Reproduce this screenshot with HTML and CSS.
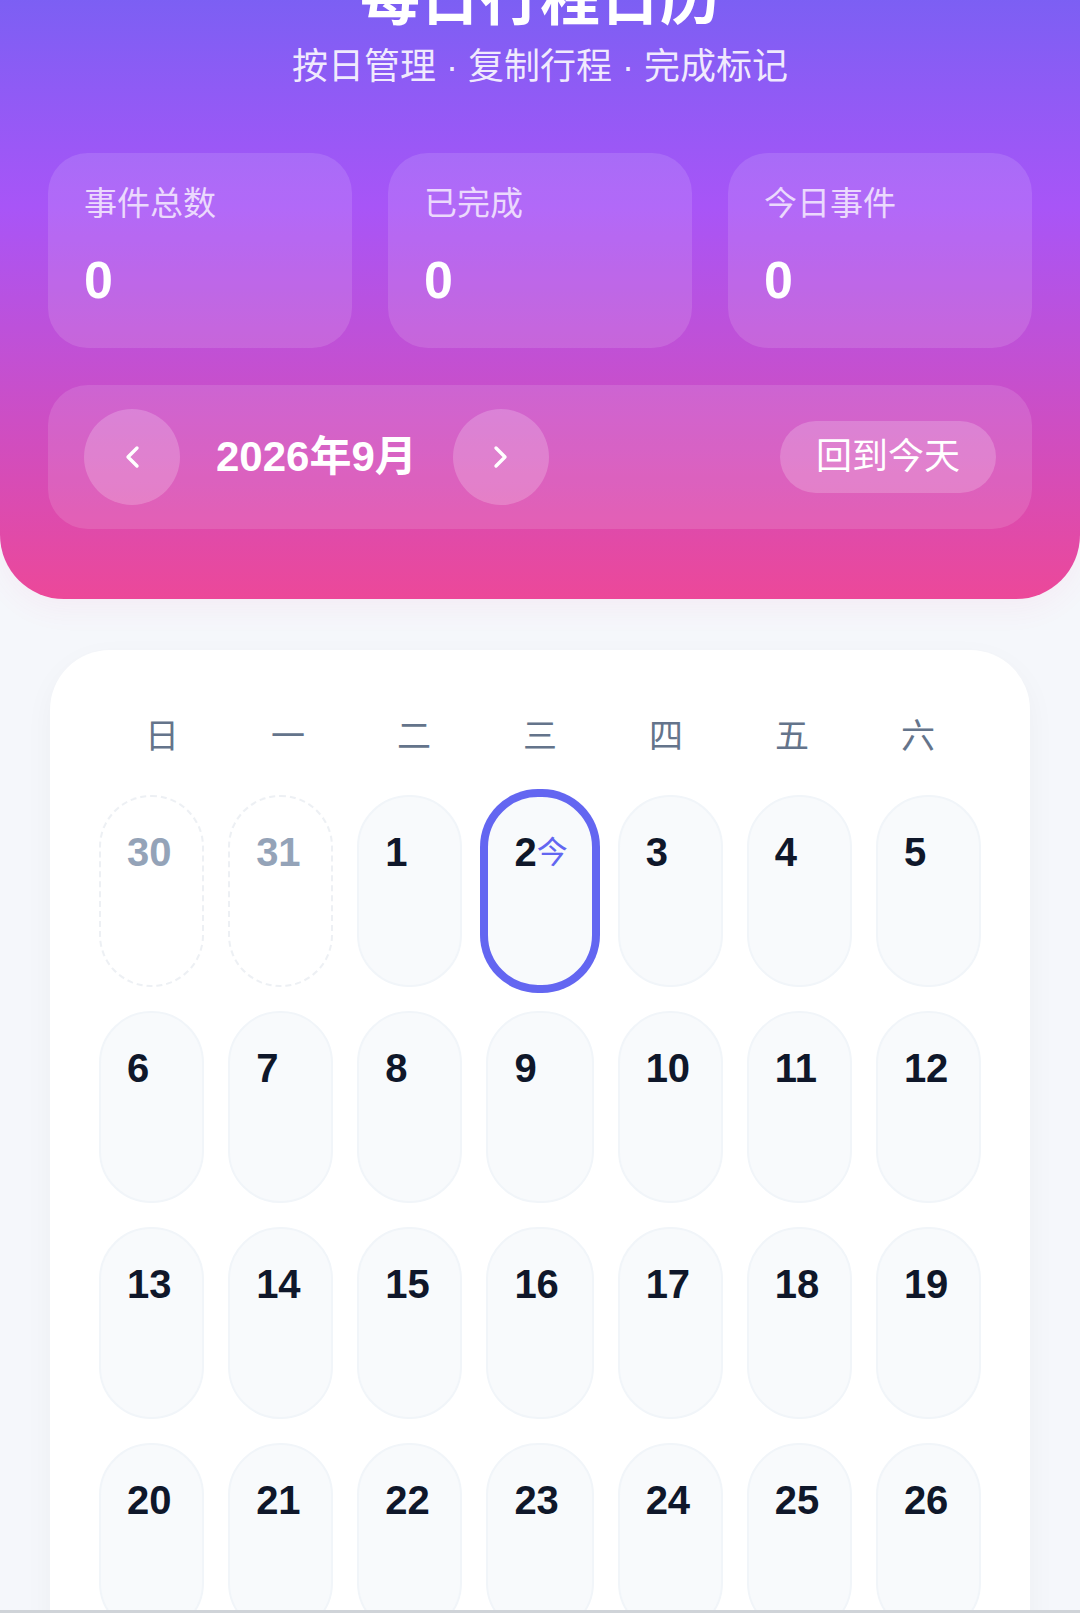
FILE: index.html
```html
<!DOCTYPE html>
<html lang="zh-CN">
<head>
<meta charset="utf-8">
<title>每日行程日历</title>
<link rel="stylesheet" href="styles.css">
</head>
<body>
<header class="hero">
  <h1 class="hero-title">每日行程日历</h1>
  <p class="hero-sub">按日管理 · 复制行程 · 完成标记</p>
  <div class="stats">
    <div class="stat"><div class="stat-label">事件总数</div><div class="stat-value">0</div></div>
    <div class="stat"><div class="stat-label">已完成</div><div class="stat-value">0</div></div>
    <div class="stat"><div class="stat-label">今日事件</div><div class="stat-value">0</div></div>
  </div>
  <div class="nav">
    <div class="nav-left">
      <button class="circle-btn" aria-label="上个月">
        <svg width="16" height="24" viewBox="0 0 16 24"><polyline points="13,3 4,12 13,21" fill="none" stroke="#fff" stroke-width="3.4" stroke-linecap="round" stroke-linejoin="round"/></svg>
      </button>
      <div class="month">2026年9月</div>
      <button class="circle-btn" aria-label="下个月">
        <svg width="16" height="24" viewBox="0 0 16 24"><polyline points="3,3 12,12 3,21" fill="none" stroke="#fff" stroke-width="3.4" stroke-linecap="round" stroke-linejoin="round"/></svg>
      </button>
    </div>
    <button class="today-btn">回到今天</button>
  </div>
</header>

<main class="calendar">
  <div class="weekdays">
    <div>日</div><div>一</div><div>二</div><div>三</div><div>四</div><div>五</div><div>六</div>
  </div>
  <div class="days">
    <div class="day other"><span class="num">30</span></div>
    <div class="day other"><span class="num">31</span></div>
    <div class="day"><span class="num">1</span></div>
    <div class="day today"><span class="num">2</span><span class="today-mark">今</span></div>
    <div class="day"><span class="num">3</span></div>
    <div class="day"><span class="num">4</span></div>
    <div class="day"><span class="num">5</span></div>
    <div class="day"><span class="num">6</span></div>
    <div class="day"><span class="num">7</span></div>
    <div class="day"><span class="num">8</span></div>
    <div class="day"><span class="num">9</span></div>
    <div class="day"><span class="num">10</span></div>
    <div class="day"><span class="num">11</span></div>
    <div class="day"><span class="num">12</span></div>
    <div class="day"><span class="num">13</span></div>
    <div class="day"><span class="num">14</span></div>
    <div class="day"><span class="num">15</span></div>
    <div class="day"><span class="num">16</span></div>
    <div class="day"><span class="num">17</span></div>
    <div class="day"><span class="num">18</span></div>
    <div class="day"><span class="num">19</span></div>
    <div class="day"><span class="num">20</span></div>
    <div class="day"><span class="num">21</span></div>
    <div class="day"><span class="num">22</span></div>
    <div class="day"><span class="num">23</span></div>
    <div class="day"><span class="num">24</span></div>
    <div class="day"><span class="num">25</span></div>
    <div class="day"><span class="num">26</span></div>
    <div class="day"><span class="num">27</span></div>
    <div class="day"><span class="num">28</span></div>
    <div class="day"><span class="num">29</span></div>
    <div class="day"><span class="num">30</span></div>
    <div class="day other"><span class="num">1</span></div>
    <div class="day other"><span class="num">2</span></div>
    <div class="day other"><span class="num">3</span></div>
  </div>
</main>
<div class="bottom-edge"></div>
</body>
</html>
```

FILE: styles.css
```css
* { box-sizing: border-box; }

html, body {
  margin: 0;
  padding: 0;
}

body {
  background: #f5f7fb;
  font-family: "Liberation Sans", "Noto Sans CJK SC", sans-serif;
  color: #0f172a;
}

button {
  font-family: inherit;
  border: none;
  cursor: pointer;
  padding: 0;
}

.hero {
  margin-top: -76px;
  padding: 40px 48px 70px;
  background: linear-gradient(180deg, #6c63f2 0%, #a855f7 42%, #ec4899 100%);
  border-radius: 0 0 64px 64px;
  color: #fff;
  text-align: center;
  box-shadow: 0 10px 30px rgba(236, 72, 153, 0.06);
}

.hero-title {
  margin: 0;
  font-size: 60px;
  line-height: 72px;
  font-weight: 700;
}

.hero-sub {
  margin: 7px 0 0;
  font-size: 36px;
  line-height: 48px;
  color: rgba(255, 255, 255, 0.88);
}

.stats {
  margin-top: 62px;
  display: grid;
  grid-template-columns: repeat(3, 1fr);
  gap: 36px;
  text-align: left;
}

.stat {
  background: rgba(255, 255, 255, 0.12);
  border-radius: 40px;
  padding: 28px 36px 37px;
}

.stat-label {
  font-size: 33px;
  line-height: 46px;
  color: rgba(255, 255, 255, 0.75);
}

.stat-value {
  margin-top: 22px;
  font-size: 52px;
  line-height: 62px;
  font-weight: 700;
  color: #fff;
}

.nav {
  margin-top: 37px;
  background: rgba(255, 255, 255, 0.12);
  border-radius: 40px;
  padding: 24px 36px;
  display: flex;
  align-items: center;
  justify-content: space-between;
}

.nav-left {
  display: flex;
  align-items: center;
  gap: 36px;
}

.circle-btn {
  width: 96px;
  height: 96px;
  border-radius: 50%;
  background: rgba(255, 255, 255, 0.2);
  display: flex;
  align-items: center;
  justify-content: center;
}

.month {
  font-size: 42px;
  line-height: 48px;
  font-weight: 700;
  color: #fff;
}

.today-btn {
  height: 72px;
  padding: 0 36px;
  border-radius: 36px;
  background: rgba(255, 255, 255, 0.2);
  color: #fff;
  font-size: 36px;
  line-height: 72px;
}

.calendar {
  margin: 51px 50px 60px;
  background: #fff;
  border-radius: 60px;
  padding: 62px 49px 60px;
  box-shadow: 0 10px 30px rgba(15, 23, 42, 0.04);
}

.weekdays {
  display: grid;
  grid-template-columns: repeat(7, 1fr);
  text-align: center;
  font-size: 34px;
  line-height: 48px;
  color: #64748b;
}

.days {
  margin-top: 35px;
  display: grid;
  grid-template-columns: repeat(7, 1fr);
  column-gap: 24px;
  row-gap: 24px;
}

.day {
  height: 192px;
  border-radius: 52px;
  background: #f8fafc;
  border: 2px solid #f1f5f9;
  padding: 31px 24px 0 26px;
  white-space: nowrap;
}

.num {
  font-size: 40px;
  line-height: 48px;
  font-weight: 700;
  color: #0f172a;
}

.day.other {
  background: #fff;
  border: 2px dashed #edf0f4;
}

.day.other .num {
  color: #94a3b8;
}

.day.today {
  box-shadow: 0 0 0 6px #6366f1;
  border-color: #6366f1;
}

.today-mark {
  font-size: 31px;
  line-height: 48px;
  color: #6366f1;
  vertical-align: 3px;
}

.bottom-edge {
  position: fixed;
  left: 0;
  right: 0;
  bottom: 0;
  height: 3px;
  background: #cfd3d8;
}
```
